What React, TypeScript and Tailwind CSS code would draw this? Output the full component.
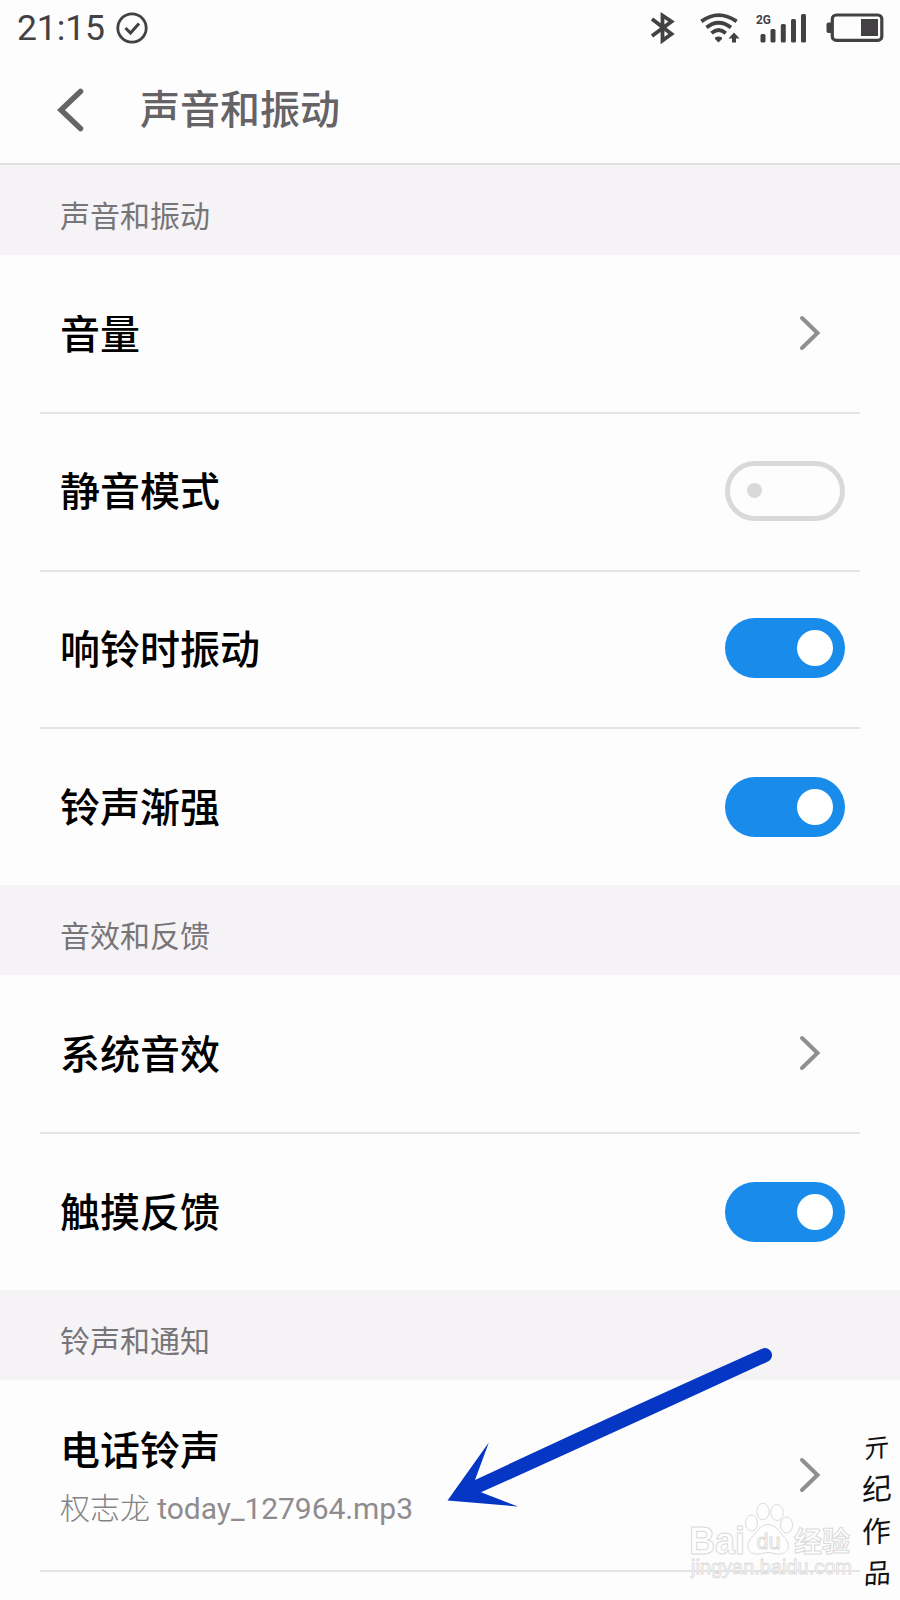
import type { ReactNode } from "react";

type Item = {
  label: string;
  artist?: string;
  file?: string;
  // undefined means the row opens another page
  on?: boolean;
};

type Group = { title: string; items: Item[] };

const groups: Group[] = [
  {
    title: "声音和振动",
    items: [
      { label: "音量" },
      { label: "静音模式", on: false },
      { label: "响铃时振动", on: true },
      { label: "铃声渐强", on: true },
    ],
  },
  {
    title: "音效和反馈",
    items: [{ label: "系统音效" }, { label: "触摸反馈", on: true }],
  },
  {
    title: "铃声和通知",
    items: [{ label: "电话铃声", artist: "权志龙", file: "today_127964.mp3" }],
  },
];

const signature = [
  { char: "亓", tilt: "-rotate-6 text-[26px]" },
  { char: "纪", tilt: "-rotate-6 text-[30px]" },
  { char: "作", tilt: "-rotate-6 text-[29px]" },
  { char: "品", tilt: "-rotate-3 text-[27px]" },
];

const StatusBar = () => (
  <div className="flex h-14 items-center justify-between pl-[17px] pr-[16px] text-[#434144]">
    <div className="flex items-center">
      <span className="w-[98px] pt-[2px] text-[35.5px] leading-none tracking-[-0.1px]">21:15</span>
      <svg width="34" height="34" viewBox="0 0 34 34" fill="none" stroke="currentColor" strokeWidth="2.8">
        <circle cx="17" cy="17" r="14.2" />
        <path d="M10.5 17 L15.5 22 L24 12.5" strokeWidth="3" />
      </svg>
    </div>
    <div className="flex items-center">
      <svg width="26" height="34" viewBox="0 0 26 34" fill="none" stroke="currentColor" strokeWidth="3.8">
        <path d="M2 8 L21.5 23 L12.5 29.5 V4.5 L21.5 10.5 L2 25" />
      </svg>
      <svg className="ml-[22px]" width="42" height="34" viewBox="0 0 42 34" fill="none" stroke="currentColor" strokeWidth="3.8">
        <path d="M3.4 10.4 Q20.5 -2.2 38.6 10.4" />
        <path d="M8.5 16.5 Q20.5 7 33 16.5" />
        <path d="M13.5 22.2 Q20.5 16 27.8 22.2" />
        <path d="M17 26.6 Q20.5 24.2 24 26.6 V28 L20.5 31.5 L17 28 Z" fill="currentColor" stroke="none" />
        <path d="M36 21.5 L41.5 27.5 H38 V31.5 H34 V27.5 H30.5 Z" fill="currentColor" stroke="none" />
      </svg>
      <svg className="ml-[14px]" width="54" height="34" viewBox="0 0 54 34" fill="currentColor">
        <text x="2" y="13" fontSize="13" fontWeight="700" textLength="15" lengthAdjust="spacingAndGlyphs">
          2G
        </text>
        <rect x="6.5" y="23" width="5" height="8.5" rx="1.5" />
        <rect x="16.5" y="18" width="5" height="13.5" rx="1.5" />
        <rect x="26.8" y="13" width="5" height="18.5" rx="1.5" />
        <rect x="37" y="8" width="5" height="23.5" rx="1.5" />
        <rect x="47" y="3" width="5" height="28.5" rx="1.5" />
      </svg>
      <svg className="ml-[17px]" width="59" height="34" viewBox="0 0 59 34" fill="currentColor">
        <rect x="1.5" y="11.5" width="6" height="10.5" rx="2" />
        <rect x="7.3" y="4" width="49.5" height="25.4" rx="4" fill="none" stroke="currentColor" strokeWidth="3.2" />
        <rect x="36" y="8" width="17" height="17" />
      </svg>
    </div>
  </div>
);

const Header = () => (
  <div className="flex h-[109px] items-center border-b-2 border-[#e2e0e2] pl-[57px]">
    <svg width="28" height="44" viewBox="0 0 28 44" fill="none" stroke="#656467" strokeWidth="5.5" strokeLinecap="round">
      <path d="M23.5 3.5 L4 22 L23.5 40.5" />
    </svg>
    <h1 className="ml-[55px] pt-[3px] text-[40px] font-medium leading-none text-[#656366]">声音和振动</h1>
  </div>
);

const Chevron = () => (
  <svg className="mr-[24px]" width="22" height="38" viewBox="0 0 22 38" fill="none" stroke="#8f8e91" strokeWidth="4" strokeLinecap="round">
    <path d="M3 4 L18.5 19 L3 34" />
  </svg>
);

const Toggle = ({ on }: { on: boolean }) =>
  on ? (
    <div className="flex h-[60px] w-[120px] items-center justify-end rounded-full bg-[#198bea] pr-[12px]">
      <div className="size-9 rounded-full bg-white" />
    </div>
  ) : (
    <div className="flex h-[60px] w-[120px] items-center rounded-full border-5 border-[#dad8db] pl-[17px]">
      <div className="size-[15px] rounded-full bg-[#dad8db]" />
    </div>
  );

const Row = ({ label, artist, file, on }: Item) => (
  <div
    className={`flex items-center justify-between pb-[2px] pl-5 pr-[15px] last:-mb-[1.5px] ${
      file ? "h-[190.5px]" : "h-[157.5px]"
    }`}
  >
    <div className="pt-[5px]">
      <div className="text-[40px] font-medium leading-[48px] text-black">{label}</div>
      {file && (
        <div className="mt-[15px] text-[30px] font-light leading-[36px] text-[#858386]">
          {artist} <span className="font-normal tracking-[-0.05px] text-[#8e8c8f]">{file}</span>
        </div>
      )}
    </div>
    {on === undefined ? <Chevron /> : <Toggle on={on} />}
  </div>
);

const Section = ({ title, children }: { title: string; children: ReactNode }) => (
  <section>
    <h2 className="flex h-[90px] items-center bg-[#f5f3f6] pl-[60px] pt-[14px] text-[30px] leading-none text-[#777578]">
      {title}
    </h2>
    <div className="mx-10 divide-y-2 divide-[#e4e3e5] pt-[1.5px]">{children}</div>
  </section>
);

const Pointer = () => (
  <svg className="absolute left-[440px] top-[1340px]" width="340" height="175" viewBox="440 1340 340 175" fill="#0536c4">
    <path d="M447.5 1500.5 L488.8 1442.5 L475 1480 Q620 1412 762 1348.8 A7 7 0 0 1 768 1361.5 Q620 1430 481 1492.3 L518 1506.5 Z" />
  </svg>
);

const Watermark = () => (
  <svg
    className="absolute left-[680px] top-[1495px]"
    width="180"
    height="95"
    viewBox="680 1495 180 95"
    fill="#fefefe"
    stroke="#dbdadc"
    strokeWidth="1"
    fontFamily="'Liberation Sans', 'Noto Sans CJK SC', sans-serif"
  >
    <text x="689" y="1553.5" fontSize="38" fontWeight="700" textLength="56" lengthAdjust="spacingAndGlyphs">
      Bai
    </text>
    <ellipse cx="751.5" cy="1523" rx="6" ry="8" />
    <ellipse cx="763" cy="1511.5" rx="6.2" ry="8.2" />
    <ellipse cx="777" cy="1512.5" rx="6.2" ry="8" />
    <ellipse cx="786.5" cy="1525" rx="6" ry="8" />
    <path d="M768 1524.5 C776 1524.5 779 1532 784 1537 C792 1545 788 1554 779 1554 C774 1554 772 1552.5 768 1552.5 C764 1552.5 762 1554 757 1554 C748 1554 745 1545 752 1537 C757 1532 760 1524.5 768 1524.5 Z" />
    <text x="756.5" y="1549" fontSize="22" textLength="24" lengthAdjust="spacingAndGlyphs">
      du
    </text>
    <text x="794" y="1551.5" fontSize="28" fontWeight="700">
      经验
    </text>
    <text x="691" y="1574" fontSize="20" strokeWidth="0.8" textLength="161" lengthAdjust="spacingAndGlyphs">
      jingyan.baidu.com
    </text>
  </svg>
);

const Signature = () => (
  <div className="absolute left-[861px] top-[1427px] flex w-8 flex-col items-center text-[#111111]">
    {signature.map(({ char, tilt }) => (
      <span key={char} className={`h-[42px] -skew-x-6 leading-[42px] ${tilt}`}>
        {char}
      </span>
    ))}
  </div>
);

export default function App() {
  return (
    <main className="relative h-[1600px] w-[900px] overflow-hidden bg-[#fdfdfd] font-[Roboto,'Noto_Sans_CJK_SC',sans-serif]">
      <StatusBar />
      <Header />
      {groups.map((group) => (
        <Section key={group.title} title={group.title}>
          {group.items.map((item) => (
            <Row key={item.label} {...item} />
          ))}
          {group.items.some((item) => item.file) && <div className="h-8" />}
        </Section>
      ))}
      <Watermark />
      <Pointer />
      <Signature />
    </main>
  );
}
